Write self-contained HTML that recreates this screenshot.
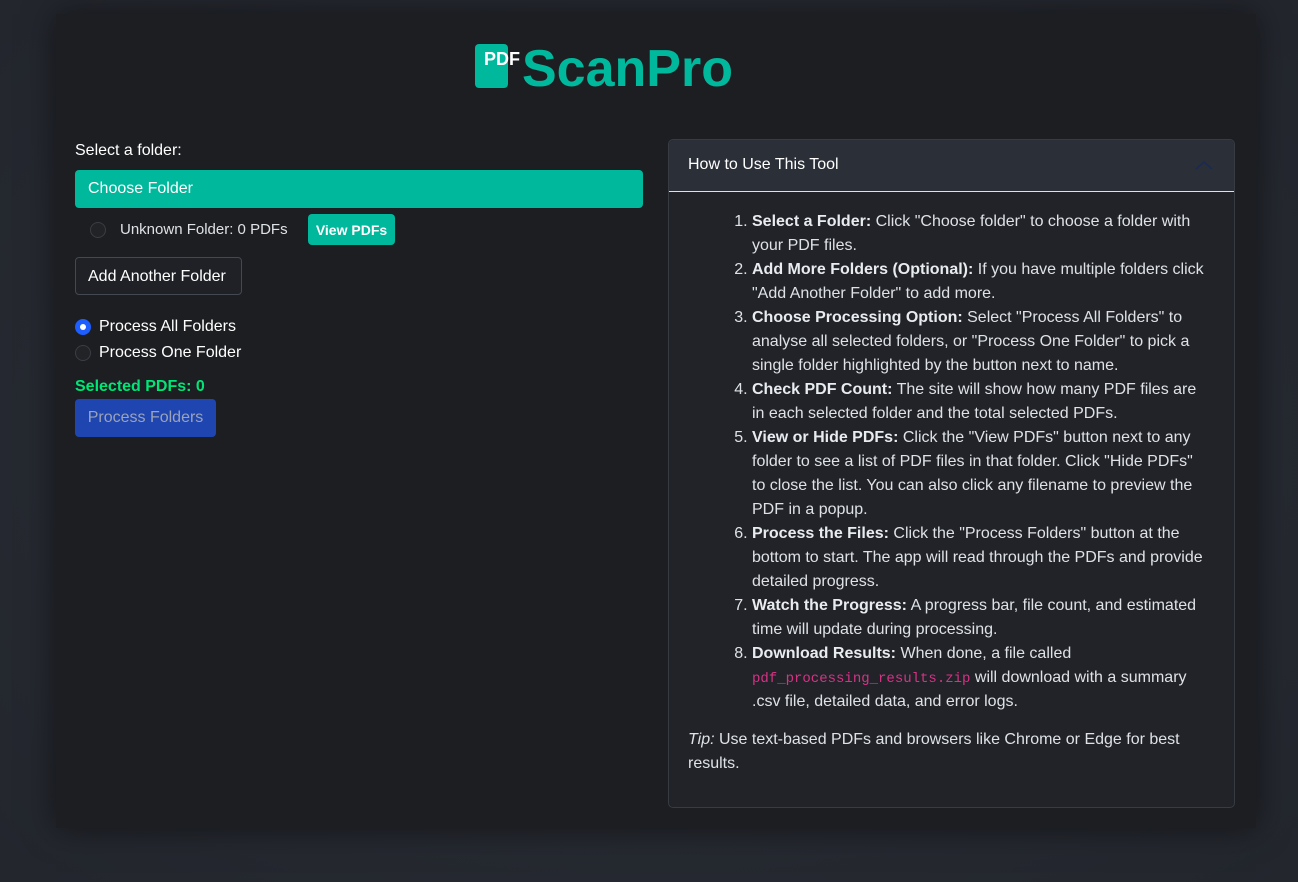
<!DOCTYPE html>
<html><head><style>
*{box-sizing:border-box}
body{margin:0;width:1298px;height:882px;background:radial-gradient(ellipse at center,#2a2e36 0%,#23262d 100%);font-family:"Liberation Sans",sans-serif;color:#dee2e6;overflow:hidden;position:relative}
.card{position:absolute;left:56px;top:14px;width:1200px;height:814px;background:#1d1e22;box-shadow:0 0 30px rgba(0,0,0,.5)}
.logo{position:absolute;left:475px;top:44px;height:46px}
.doc{position:absolute;left:0;top:0;width:33px;height:44px;background:#00b89c;border-radius:4px}
.pdf{position:absolute;left:9px;top:5px;color:#fff;font-weight:bold;font-size:18px}
.name{position:absolute;left:47px;top:-5px;color:#00b89c;font-weight:bold;font-size:52px;white-space:nowrap}
.l{position:absolute;left:75px;font-size:16px;white-space:nowrap}
.btn{position:absolute;border-radius:4px;font-size:16px;white-space:nowrap}
.radio{position:absolute;width:16px;height:16px;border-radius:50%;border:1px solid #3a3d44;background:#212327}
.panel{position:absolute;left:668px;top:139px;width:567px;height:669px;border:1px solid #373b42;border-radius:5px;background:#212329;overflow:hidden}
.ph{height:52px;background:#2b2f37;border-bottom:1px solid #dee2e6;padding:16px 0 0 19px;font-size:16px;color:#fff}
ol{margin:0;padding:18px 24px 0 83px;font-size:16px;line-height:24px;color:#dee2e6}
li{padding-left:0}
b{color:#e9ecef}
code{font-family:"Liberation Mono",monospace;color:#d63384;font-size:14px;line-height:14px}
.tip{padding:14px 20px 0 19px;font-size:16px;line-height:24px}
</style></head><body>
<div class="card">
</div>
<div class="logo"><div class="doc"></div><div class="pdf">PDF</div><div class="name">ScanPro</div></div>
<div class="l" style="top:142px;color:#fff">Select a folder:</div>
<div class="btn" style="left:75px;top:170px;width:568px;height:38px;background:#00b89c;color:#fff;padding:10px 13px">Choose Folder</div>
<div class="radio" style="left:90px;top:222px"></div>
<div class="l" style="left:120px;top:221px;font-size:15px">Unknown Folder: 0 PDFs</div>
<div class="btn" style="left:308px;top:214px;width:87px;height:31px;background:#00b89c;color:#fff;font-size:14px;font-weight:bold;padding:8px 0;text-align:center">View PDFs</div>
<div class="btn" style="left:75px;top:257px;width:167px;height:38px;border:1px solid #444850;color:#fff;padding:10px 12px;background:#1f2126">Add Another Folder</div>
<div class="radio" style="left:75px;top:319px;background:#1e5eff;border-color:#1e5eff"><div style="position:absolute;left:4px;top:4px;width:6px;height:6px;border-radius:50%;background:#fff"></div></div>
<div class="l" style="left:99px;top:318px;color:#fff">Process All Folders</div>
<div class="radio" style="left:75px;top:345px"></div>
<div class="l" style="left:99px;top:344px;color:#fff">Process One Folder</div>
<div class="l" style="top:378px;color:#00e676;font-weight:bold">Selected PDFs: 0</div>
<div class="btn" style="left:75px;top:399px;width:141px;height:38px;background:#1f45b0;color:#9aa3b8;padding:10px 0;text-align:center">Process Folders</div>
<div class="panel">
<div class="ph">How to Use This Tool<svg style="position:absolute;left:526px;top:20px" width="18" height="10" viewBox="0 0 18 10"><path d="M1 9L9 2L17 9" stroke="#1a2a55" stroke-width="1.5" fill="none"/></svg></div>
<ol>
<li><b>Select a Folder:</b> Click "Choose folder" to choose a folder with your PDF files.</li>
<li><b>Add More Folders (Optional):</b> If you have multiple folders click "Add Another Folder" to add more.</li>
<li><b>Choose Processing Option:</b> Select "Process All Folders" to analyse all selected folders, or "Process One Folder" to pick a single folder highlighted by the button next to name.</li>
<li><b>Check PDF Count:</b> The site will show how many PDF files are in each selected folder and the total selected PDFs.</li>
<li><b>View or Hide PDFs:</b> Click the "View PDFs" button next to any folder to see a list of PDF files in that folder. Click "Hide PDFs" to close the list. You can also click any filename to preview the PDF in a popup.</li>
<li><b>Process the Files:</b> Click the "Process Folders" button at the bottom to start. The app will read through the PDFs and provide detailed progress.</li>
<li><b>Watch the Progress:</b> A progress bar, file count, and estimated time will update during processing.</li>
<li><b>Download Results:</b> When done, a file called <code>pdf_processing_results.zip</code> will download with a summary .csv file, detailed data, and error logs.</li>
</ol>
<div class="tip"><i>Tip:</i> Use text-based PDFs and browsers like Chrome or Edge for best results.</div>
</div>
</body></html>
